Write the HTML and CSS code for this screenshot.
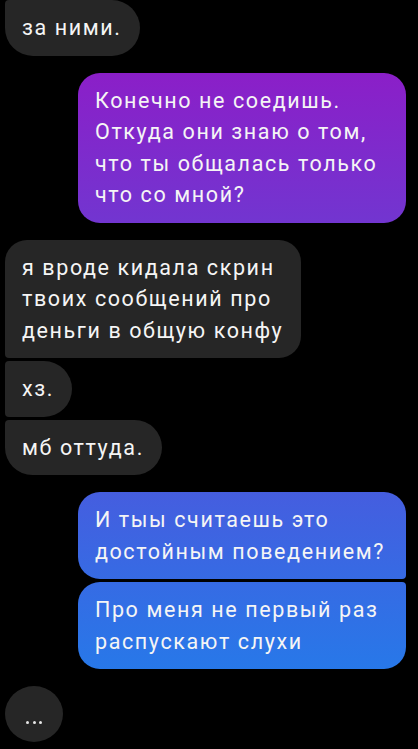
FILE: index.html
```html
<!DOCTYPE html>
<html lang="ru">

<head>
    <meta charset="UTF-8">
    <meta name="viewport" content="width=device-width, initial-scale=1.0">
    <title>Chat</title>
    <link rel="stylesheet" href="styles.css">
</head>

<body>

    <div class="thread">
        <!-- their messages (continued from above) -->
        <div class="group them">
            <div class="bubble last single">за ними.</div>
        </div>

        <!-- my message -->
        <div class="group me">
            <div class="bubble">Конечно не соедишь.<br>Откуда они знаю о том,<br>что ты общалась только<br>что со мной?</div>
        </div>

        <div class="group them">
            <div class="bubble first">я вроде кидала скрин<br>твоих сообщений про<br>деньги в общую конфу</div>
            <div class="bubble middle single">хз.</div>
            <div class="bubble last single">мб оттуда.</div>
        </div>

        <div class="group me">
            <div class="bubble first">И тыы считаешь это<br>достойным поведением?</div>
            <div class="bubble last">Про меня не первый раз<br>распускают слухи</div>
        </div>

        <!-- typing indicator -->
        <div class="group them">
            <div class="typing">
                <span></span><span></span><span></span>
            </div>
        </div>
    </div>

</body>

</html>
```

FILE: styles.css
```css
body {
    font-family: Roboto, "Noto Sans", sans-serif;
    background-color: #000;
    margin: 0;
    padding: 0;
}

.thread {
    display: flex;
    flex-direction: column;
    gap: 17px;
    padding: 0 12px 0 5px;
}

.group {
    display: flex;
    flex-direction: column;
    gap: 3px;
}

.them {
    align-items: flex-start;
}

.me {
    align-items: flex-end;
}

.bubble {
    padding: 12px 18px 12px 17px;
    font-size: 21.5px;
    letter-spacing: 1.6px;
    line-height: 31.5px;
    color: #f5f5f5;
    border-radius: 22px;
    white-space: nowrap;
}

.me .bubble {
    min-width: 290px;
    padding-right: 21px;
    background: linear-gradient(to bottom, #9714c4, #1a84ed) fixed;
}

.bubble.single {
    border-radius: 28px;
}

.them .bubble {
    background-color: #262626;
}

/* grouped corners */
.them .first {
    border-bottom-left-radius: 4px;
}

.them .middle {
    border-top-left-radius: 4px;
    border-bottom-left-radius: 4px;
}

.them .last {
    border-top-left-radius: 4px;
}

.me .first {
    border-bottom-right-radius: 4px;
}

.me .last {
    border-top-right-radius: 4px;
}

.typing {
    width: 58px;
    height: 56px;
    border-radius: 50%;
    background-color: #262626;
    display: flex;
    justify-content: center;
    align-items: center;
    gap: 3.5px;
    padding-top: 16px;
    box-sizing: border-box;
}

.typing span {
    width: 3px;
    height: 3px;
    border-radius: 50%;
    background-color: #e6e6e6;
}
```
